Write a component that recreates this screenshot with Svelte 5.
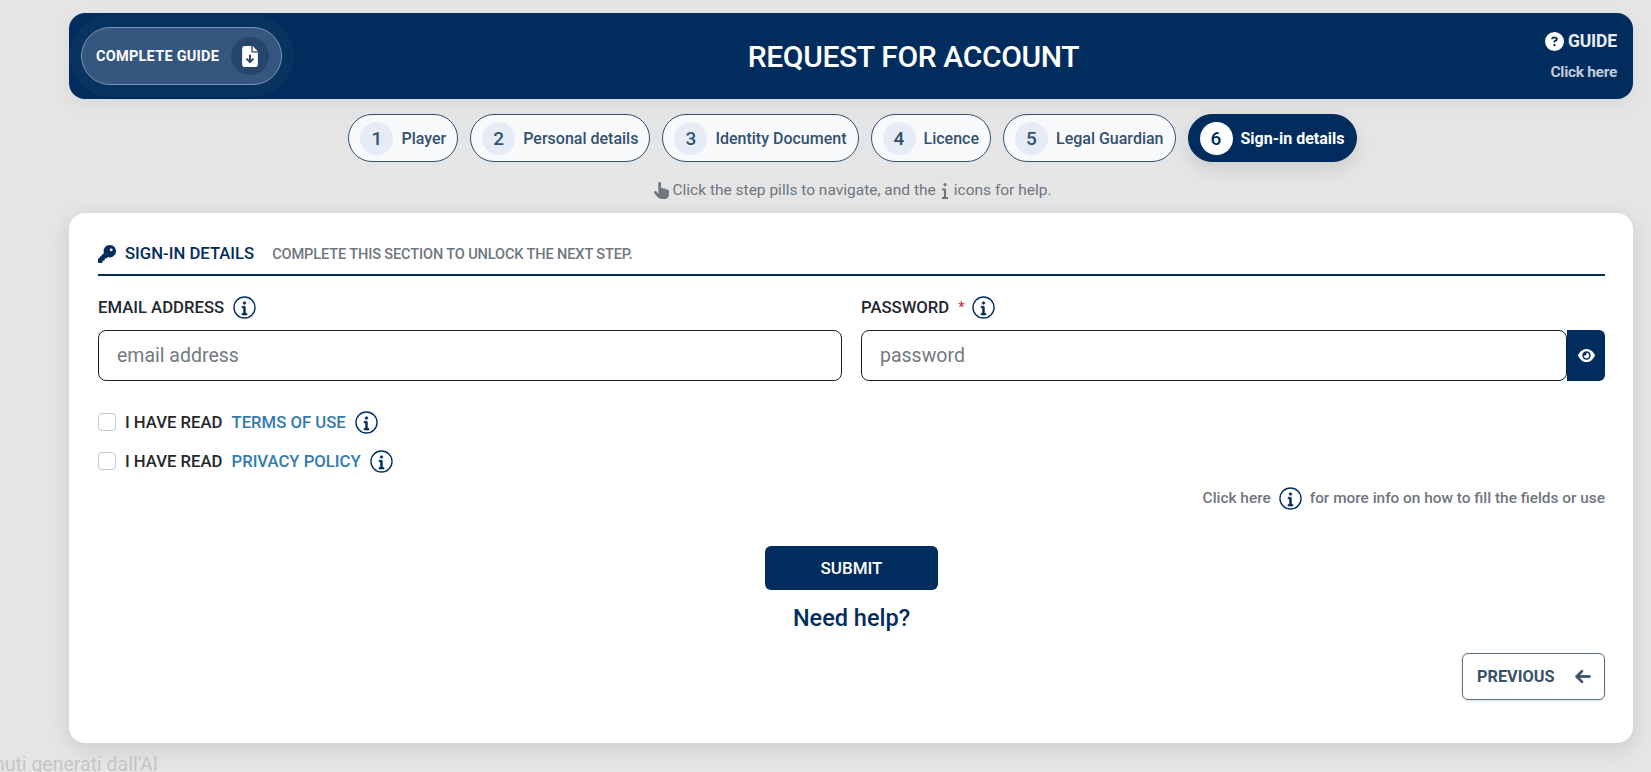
<script>
	const steps = ['Player', 'Personal details', 'Identity Document', 'Licence', 'Legal Guardian', 'Sign-in details'];
	const current = 5;

	const iPath =
		'M48 80a48 48 0 1 1 96 0A48 48 0 1 1 48 80zM0 224c0-17.7 14.3-32 32-32H96c17.7 0 32 14.3 32 32V448h32c17.7 0 32 14.3 32 32s-14.3 32-32 32H32c-17.7 0-32-14.3-32-32s14.3-32 32-32H64V256H32c-17.7 0-32-14.3-32-32z';
</script>

{#snippet info()}
	<svg class="info" viewBox="0 0 24 24" aria-hidden="true">
		<circle cx="12" cy="12" r="11" fill="none" stroke="currentColor" stroke-width="1.4" />
		<path transform="translate(9.2 5) scale(0.029)" d={iPath} fill="currentColor" stroke="currentColor" stroke-width="22" />
	</svg>
{/snippet}

<div class="page">
	<header class="topbar">
		<button class="guide-btn">
			<span>COMPLETE GUIDE</span>
			<span class="guide-btn__icon">
				<svg viewBox="0 0 384 512" aria-hidden="true">
					<path
						fill="currentColor"
						d="M64 0C28.7 0 0 28.7 0 64V448c0 35.3 28.7 64 64 64H320c35.3 0 64-28.7 64-64V160H256c-17.7 0-32-14.3-32-32V0H64zM256 0V128H384L256 0zM216 232V334.1l31-31c9.4-9.4 24.6-9.4 33.9 0s9.4 24.6 0 33.9l-72 72c-9.4 9.4-24.6 9.4-33.9 0l-72-72c-9.4-9.4-9.4-24.6 0-33.9s24.6-9.4 33.9 0l31 31V232c0-13.3 10.7-24 24-24s24 10.7 24 24z"
					/>
				</svg>
			</span>
		</button>
		<h1>REQUEST FOR ACCOUNT</h1>
		<div class="help">
			<div class="help__title">
				<svg viewBox="0 0 512 512" aria-hidden="true">
					<path
						fill="currentColor"
						d="M256 512A256 256 0 1 0 256 0a256 256 0 1 0 0 512zM169.8 165.3c7.9-22.3 29.1-37.3 52.8-37.3h58.3c34.9 0 63.1 28.3 63.1 63.1c0 22.6-12.1 43.5-31.7 54.8L280 264.4c-.2 13-10.9 23.6-24 23.6c-13.3 0-24-10.7-24-24V250.5c0-8.6 4.6-16.5 12.1-20.8l44.3-25.4c4.7-2.7 7.6-7.7 7.6-13.1c0-8.4-6.8-15.1-15.1-15.1H222.6c-3.4 0-6.4 2.1-7.5 5.3l-.4 1.2c-4.4 12.5-18.2 19-30.6 14.6s-19-18.2-14.6-30.6l.4-1.2zM224 352a32 32 0 1 1 64 0 32 32 0 1 1 -64 0z"
					/>
				</svg>
				GUIDE
			</div>
			<div class="help__sub">Click here</div>
		</div>
	</header>

	<nav class="steps">
		{#each steps as step, i}
			<button class="pill" class:pill--active={i === current}>
				<span class="pill__num">{i + 1}</span>
				<span>{step}</span>
			</button>
		{/each}
	</nav>

	<p class="hint">
		<svg class="hand" viewBox="0 0 448 512" aria-hidden="true">
			<path
				fill="currentColor"
				d="M128 40c0-22.1 17.9-40 40-40s40 17.9 40 40V188.2c8.5-7.6 19.7-12.2 32-12.2c20.6 0 38.2 13 45 31.2c8.8-9.3 21.2-15.2 35-15.2c25.3 0 46 19.5 47.9 44.3c8.5-7.7 19.8-12.3 32.1-12.3c26.5 0 48 21.5 48 48v112c0 70.7-57.3 128-128 128H234.700c-5 0-9.900-.3-14.700-1c-55.300-5.600-106.200-34-140-79L8 336c-13.300-17.700-9.700-42.700 8-56s42.700-9.700 56 8l56 74.700V40z"
			/>
		</svg>
		<span>Click the step pills to navigate, and the</span>
		<svg class="hint__i" viewBox="0 0 192 512" aria-hidden="true"><path fill="currentColor" d={iPath} /></svg>
		<span>icons for help.</span>
	</p>

	<main class="card">
		<div class="section-head">
			<svg viewBox="0 0 512 512" aria-hidden="true">
				<path
					fill="currentColor"
					d="M336 352c97.200 0 176-78.800 176-176S433.200 0 336 0S160 78.800 160 176c0 18.700 2.900 36.800 8.300 53.700L7 391c-4.500 4.500-7 10.600-7 17v80c0 13.300 10.700 24 24 24h80c13.300 0 24-10.700 24-24V448h40c13.300 0 24-10.700 24-24V384h40c6.400 0 12.500-2.500 17-7l33.300-33.300c16.900 5.400 35 8.300 53.700 8.300zM376 96a40 40 0 1 1 0 80 40 40 0 1 1 0-80z"
				/>
			</svg>
			<h2>SIGN-IN DETAILS</h2>
			<span class="section-head__sub">COMPLETE THIS SECTION TO UNLOCK THE NEXT STEP.</span>
		</div>

		<div class="fields">
			<div class="field">
				<div class="field__label"><span>EMAIL ADDRESS</span>{@render info()}</div>
				<input type="text" placeholder="email address" />
			</div>
			<div class="field">
				<div class="field__label">
					<span>PASSWORD</span><span class="req">*</span>{@render info()}
				</div>
				<div class="input-group">
					<input type="text" placeholder="password" />
					<button class="eye" aria-label="show password">
						<svg viewBox="0 0 576 512" aria-hidden="true">
							<path
								fill="currentColor"
								d="M288 32c-80.800 0-145.500 36.800-192.600 80.600C48.600 156 17.300 208 2.500 243.700c-3.300 7.900-3.300 16.700 0 24.600C17.300 304 48.600 356 95.400 399.400C142.500 443.200 207.200 480 288 480s145.500-36.800 192.600-80.600c46.800-43.500 78.100-95.400 93-131.100c3.300-7.900 3.300-16.700 0-24.600c-14.900-35.700-46.200-87.700-93-131.100C433.500 68.800 368.800 32 288 32zM144 256a144 144 0 1 1 288 0 144 144 0 1 1 -288 0zm144-64c0 35.300-28.700 64-64 64c-7.100 0-13.900-1.200-20.300-3.300c-5.500-1.800-11.900 1.600-11.700 7.400c.3 6.900 1.300 13.800 3.200 20.700c13.700 51.200 66.400 81.600 117.600 67.900s81.600-66.400 67.900-117.600c-11.100-41.500-47.800-69.400-88.600-71.100c-5.800-.2-9.200 6.100-7.400 11.700c2.100 6.400 3.300 13.200 3.300 20.300z"
							/>
						</svg>
					</button>
				</div>
			</div>
		</div>

		<div class="checks">
			<div class="check">
				<span class="box"></span><span>I HAVE READ</span><span class="link">TERMS OF USE</span>{@render info()}
			</div>
			<div class="check">
				<span class="box"></span><span>I HAVE READ</span><span class="link">PRIVACY POLICY</span>{@render info()}
			</div>
		</div>

		<div class="more">
			<span>Click here</span>{@render info()}<span>for more info on how to fill the fields or use</span>
		</div>

		<div class="actions">
			<button class="submit">SUBMIT</button>
			<div class="need-help">Need help?</div>
		</div>

		<div class="nav-row">
			<button class="prev">
				<span>PREVIOUS</span>
				<svg viewBox="0 0 448 512" aria-hidden="true">
					<path
						fill="currentColor"
						stroke="currentColor"
						stroke-width="24"
						d="M9.400 233.400c-12.500 12.500-12.500 32.800 0 45.300l160 160c12.500 12.500 32.800 12.500 45.300 0s12.500-32.800 0-45.300L109.200 288 416 288c17.700 0 32-14.300 32-32s-14.300-32-32-32l-306.700 0L214.600 118.600c12.500-12.500 12.500-32.800 0-45.300s-32.800-12.500-45.300 0l-160 160z"
					/>
				</svg>
			</button>
		</div>
	</main>

	<div class="ai-note"><span>Contenuti generati dall'AI</span></div>
</div>

<style>
	:global(body) {
		margin: 0;
		background: #e5e5e5;
	}

	.page {
		--navy: #012d5e;
		box-sizing: border-box;
		height: 772px;
		overflow: hidden;
		padding: 13px 18px 0 69px;
		font-family: Roboto, 'Liberation Sans', sans-serif;
		position: relative;
	}

	button {
		font-family: inherit;
		cursor: pointer;
	}

	.topbar {
		height: 86px;
		box-sizing: border-box;
		padding: 0 16px 0 12px;
		display: flex;
		align-items: center;
		background: var(--navy);
		border-radius: 16px;
		color: #fff;
		box-shadow: 0 6px 20px rgba(0, 0, 0, 0.05);
	}

	.guide-btn {
		width: 201px;
		height: 58px;
		box-sizing: border-box;
		padding: 0 12px 0 14px;
		display: flex;
		align-items: center;
		justify-content: space-between;
		background: #34567f;
		border: 1px solid #7b93b0;
		border-radius: 29px;
		color: #fff;
		font-size: 14.5px;
		font-weight: 700;
		letter-spacing: 0.25px;
		box-shadow: 0 0 0 12px #08335f;
	}

	.guide-btn__icon {
		width: 38px;
		height: 38px;
		border-radius: 50%;
		background: #28466b;
		display: flex;
		align-items: center;
		justify-content: center;
	}

	.guide-btn__icon svg {
		width: 16px;
		height: 21px;
	}

	h1 {
		flex: 1;
		margin: 0;
		text-align: center;
		font-size: 30px;
		font-weight: 500;
		letter-spacing: -0.35px;
	}

	.help {
		text-align: right;
		font-weight: 700;
	}

	.help__title {
		display: flex;
		align-items: center;
		gap: 4px;
		font-size: 17.5px;
		color: #e8edf3;
		letter-spacing: -0.15px;
	}

	.help__title svg {
		width: 19px;
		height: 19px;
		color: #fff;
	}

	.help__sub {
		margin-top: 12px;
		font-size: 15.5px;
		color: #c0cbd9;
		letter-spacing: -0.3px;
	}

	.steps {
		margin-top: 15px;
		padding-left: 3px;
		display: flex;
		justify-content: center;
		gap: 12px;
	}

	.pill {
		height: 48px;
		box-sizing: border-box;
		padding: 0 11px;
		display: flex;
		align-items: center;
		gap: 8px;
		background: #f8f9fb;
		border: 1px solid #34506f;
		border-radius: 24px;
		color: #34506f;
		font-size: 16px;
		font-weight: 500;
		white-space: nowrap;
	}

	.pill__num {
		width: 33px;
		height: 33px;
		border-radius: 50%;
		background: #e5ecf6;
		display: flex;
		align-items: center;
		justify-content: center;
		font-size: 19px;
		font-weight: 500;
	}

	.pill--active {
		background: var(--navy);
		border-color: var(--navy);
		color: #fff;
		font-weight: 700;
		box-shadow: 0 8px 18px rgba(0, 0, 0, 0.1);
	}

	.pill--active .pill__num {
		background: #fff;
		color: var(--navy);
	}

	.hint {
		margin: 18px 0 0;
		padding-left: 4px;
		height: 20px;
		display: flex;
		align-items: center;
		justify-content: center;
		gap: 3px;
		color: #6f767e;
		font-size: 15.5px;
	}

	.hand {
		width: 15px;
		height: 17px;
	}

	.hint__i {
		width: 8px;
		height: 17px;
		margin: 0 2px;
	}

	.card {
		margin-top: 13px;
		height: 530px;
		box-sizing: border-box;
		padding: 24px 28px 0 29px;
		background: #fff;
		border-radius: 16px;
		box-shadow: 0 5px 22px rgba(0, 0, 0, 0.12);
	}

	.section-head {
		height: 39px;
		box-sizing: border-box;
		display: flex;
		align-items: center;
		border-bottom: 2px solid var(--navy);
		padding-bottom: 4px;
		color: var(--navy);
	}

	.section-head svg {
		width: 18px;
		height: 18px;
		margin-right: 9px;
	}

	h2 {
		margin: 0 18px 0 0;
		font-size: 16.7px;
		font-weight: 500;
	}

	.section-head__sub {
		font-size: 14.6px;
		font-weight: 500;
		color: #6f767e;
		letter-spacing: -0.15px;
	}

	.fields {
		margin-top: 18px;
		display: grid;
		grid-template-columns: 744px 1fr;
		gap: 19px;
	}

	.field__label {
		height: 26px;
		display: flex;
		align-items: center;
		gap: 9px;
		font-size: 16.7px;
		font-weight: 500;
		color: #23282d;
	}

	.req {
		color: #c8324a;
		font-size: 14px;
		margin-right: -1px;
	}

	.info {
		width: 23px;
		height: 23px;
		color: var(--navy);
		flex: none;
	}

	input {
		display: block;
		width: 100%;
		height: 51px;
		margin-top: 10px;
		box-sizing: border-box;
		padding: 0 18px;
		border: 1.5px solid #1a1e23;
		border-radius: 8px;
		background: #fff;
		font-family: inherit;
		font-size: 19.5px;
		outline: none;
	}

	input::placeholder {
		color: #72797f;
		opacity: 1;
	}

	.input-group {
		display: flex;
		align-items: flex-end;
	}

	.eye {
		width: 38px;
		height: 51px;
		flex: none;
		padding: 0;
		border: 0;
		border-radius: 0 6px 6px 0;
		background: var(--navy);
		color: #fff;
		display: flex;
		align-items: center;
		justify-content: center;
	}

	.eye svg {
		width: 17px;
		height: 15px;
	}

	.checks {
		margin-top: 29px;
		display: flex;
		flex-direction: column;
		gap: 15px;
	}

	.check {
		height: 24px;
		display: flex;
		align-items: center;
		font-size: 16.7px;
		font-weight: 500;
		color: #23282d;
	}

	.box {
		width: 16px;
		height: 16px;
		margin-right: 9px;
		border: 1px solid #c4c8cc;
		border-radius: 4px;
	}

	.link {
		margin: 0 9px;
		color: #337ab0;
	}

	.more {
		margin-top: 13px;
		height: 24px;
		display: flex;
		align-items: center;
		justify-content: flex-end;
		gap: 8px;
		font-size: 15.4px;
		font-weight: 500;
		color: #6f767e;
	}

	.actions {
		margin-top: 36px;
		display: flex;
		flex-direction: column;
		align-items: center;
	}

	.submit {
		width: 173px;
		height: 44px;
		border: 0;
		border-radius: 6px;
		background: var(--navy);
		color: #fff;
		font-size: 17px;
		font-weight: 500;
	}

	.need-help {
		margin-top: 14px;
		font-size: 23.5px;
		font-weight: 500;
		color: var(--navy);
	}

	.nav-row {
		margin-top: 21px;
		display: flex;
		justify-content: flex-end;
	}

	.prev {
		width: 143px;
		height: 47px;
		box-sizing: border-box;
		padding: 0 13px 0 14px;
		display: flex;
		align-items: center;
		justify-content: space-between;
		background: #fff;
		border: 1.5px solid #5a6f86;
		border-radius: 6px;
		color: #3a5068;
		font-size: 16.3px;
		font-weight: 700;
		box-shadow: 0 1px 3px rgba(0, 0, 0, 0.15);
	}

	.prev svg {
		width: 16px;
		height: 17px;
	}

	.ai-note {
		width: 158px;
		margin-left: -69px;
		margin-top: 10px;
		display: flex;
		justify-content: flex-end;
		overflow: hidden;
		white-space: nowrap;
		font-size: 19.5px;
		color: #c6c6c6;
	}
</style>
